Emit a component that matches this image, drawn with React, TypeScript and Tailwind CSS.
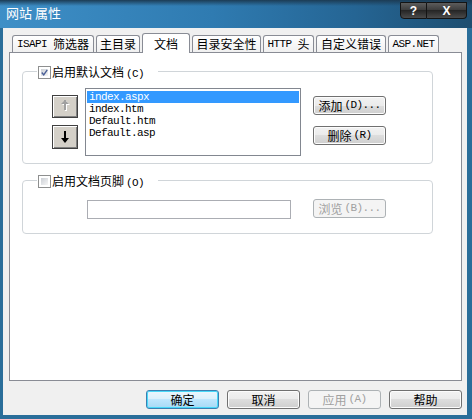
import React from "react";

const mono = "font-['Liberation_Mono','Noto_Sans_CJK_SC',monospace] text-[11px] tracking-[-0.6px]";

function Tab({ label, width, active }: { label: React.ReactNode; width: string; active?: boolean }) {
  if (active) {
    return (
      <div
        className={`${width} relative z-10 -mb-px h-[20px] flex items-center justify-center bg-white border border-b-0 border-[#898c95] rounded-t-[3px] text-[12px] text-black`}
      >
        {label}
      </div>
    );
  }
  return (
    <div
      className={`${width} h-[17px] flex items-center justify-center border border-b-0 border-[#898c95] rounded-t-[3px] bg-[linear-gradient(#ffffff,#f0f0f0)] text-[12px] text-black`}
    >
      {label}
    </div>
  );
}

function VButton({ children, disabled, focused }: { children: React.ReactNode; disabled?: boolean; focused?: boolean }) {
  if (disabled) {
    return (
      <div className="w-[73px] h-[19px] flex items-center justify-center rounded-[3px] border border-[#adb2b5] bg-[#f4f4f4] text-[12px] text-[#a0a0a0]">
        {children}
      </div>
    );
  }
  if (focused) {
    return (
      <div className="w-[73px] h-[19px] flex items-center justify-center rounded-[3px] border border-[#3c7fb1] bg-[linear-gradient(#eaf6fd_0%,#d9f0fc_50%,#bee6fd_50%,#a7d9f5_100%)] shadow-[inset_0_0_0_1px_#48d8f8] text-[12px] text-black">
        {children}
      </div>
    );
  }
  return (
    <div className="w-[73px] h-[19px] flex items-center justify-center rounded-[3px] border border-[#707070] bg-[linear-gradient(#f2f2f2_0%,#ebebeb_50%,#dddddd_50%,#cfcfcf_100%)] shadow-[inset_0_0_0_1px_#fcfcfc] text-[12px] text-black">
      {children}
    </div>
  );
}

function CheckBox({ checked }: { checked?: boolean }) {
  return (
    <div className="w-[13px] h-[13px] border border-[#8e8f8f] bg-white p-[2px]">
      <div className="w-full h-full bg-[linear-gradient(135deg,#cbcfd5,#f6f6f6)] flex items-center justify-center">
        {checked && (
          <svg width="9" height="9" viewBox="0 0 9 9">
            <path d="M1 4.5 L3.5 7.5 L8 1" fill="none" stroke="#4a5f97" strokeWidth="1.8" />
          </svg>
        )}
      </div>
    </div>
  );
}

function ArrowButton({ down }: { down?: boolean }) {
  return (
    <div
      className={`w-[26px] ${down ? "h-[24px]" : "h-[23px]"} border border-[#404040] bg-[#d4d0c8] shadow-[inset_1px_1px_0_#ffffff,inset_-1px_-1px_0_#808080] flex items-center justify-center`}
    >
      {down ? (
        <svg width="8" height="12" viewBox="0 0 8 12">
          <rect x="3" y="0" width="2" height="9" fill="#000" />
          <path d="M0 7 L8 7 L4 12 Z" fill="#000" />
        </svg>
      ) : (
        <svg width="9" height="13" viewBox="0 0 9 13">
          <rect x="4" y="1" width="2" height="10" fill="#ffffff" />
          <path d="M1 5 L9 5 L5 1 Z" fill="#ffffff" />
          <rect x="3" y="0" width="2" height="10" fill="#a0a0a0" />
          <path d="M0 4 L8 4 L4 0 Z" fill="#a0a0a0" />
        </svg>
      )}
    </div>
  );
}

export default function App() {
  return (
    <div className="w-[472px] h-[419px] flex flex-col font-['Noto_Sans_CJK_SC','Liberation_Sans',sans-serif] bg-[#1d4f73]">
      {/* Title bar */}
      <div className="relative h-[28px] shrink-0 bg-[linear-gradient(90deg,#3e8fc7_0%,#2f7bb1_45%,#256594_75%,#1e4e70_100%)]">
        <div className="absolute inset-x-0 top-0 h-[6px] bg-[linear-gradient(#1c3c55,transparent)]" />
        <span className="absolute left-[6px] top-[5px] text-[13px] leading-[16px] text-white">网站 属性</span>
        <div className="absolute right-[5px] top-[2px] flex">
          <div className="w-[27px] h-[17px] rounded-bl-[4px] border border-[#141414] bg-[linear-gradient(#5c5c5c,#3a3a3a_50%,#262626_50%,#4a4a4a)] flex items-center justify-center text-white text-[12px] font-bold font-['Liberation_Sans',sans-serif]">
            ?
          </div>
          <div className="w-[40px] h-[17px] rounded-br-[4px] border border-l-0 border-[#141414] bg-[linear-gradient(#5c5c5c,#3a3a3a_50%,#262626_50%,#4a4a4a)] flex items-center justify-center text-white text-[12px] font-bold font-['Liberation_Sans',sans-serif]">
            X
          </div>
        </div>
      </div>

      {/* Client area */}
      <div className="flex-1 flex flex-col bg-[#f0f0f0] border-l-[3px] border-r-[5px] border-b-[4px] border-[#2a6e9a] pl-[6px] pr-[5px]">
        {/* Tabs */}
        <div className="flex items-end gap-[2px] pl-[3px] mt-[5px] h-[19px]">
          <Tab width="w-[82px]" label={<><span className={mono}>ISAPI&nbsp;</span>筛选器</>} />
          <Tab width="w-[44px]" label="主目录" />
          <Tab width="w-[48px]" label="文档" active />
          <Tab width="w-[69px]" label="目录安全性" />
          <Tab width="w-[51px]" label={<><span className={mono}>HTTP&nbsp;</span>头</>} />
          <Tab width="w-[70px]" label="自定义错误" />
          <Tab width="w-[51px]" label={<span className={mono}>ASP.NET</span>} />
        </div>

        {/* Panel */}
        <div className="h-[329px] bg-white border border-[#898c95] pl-[12px] pt-[18px]">
          {/* Group 1 */}
          <div className="relative w-[411px] h-[93px] border border-[#d0d5d9] rounded-[4px] shadow-[inset_1px_1px_0_#ffffff]">
            <div className="absolute left-[14px] -top-[6px] flex items-center gap-[1px] bg-white pl-[1px] pr-[14px] h-[13px]">
              <CheckBox checked />
              <span className="text-[12px] leading-[13px] text-black">
                启用默认文档<span className={`${mono} ml-[2px]`}>(C)</span>
              </span>
            </div>
            <div className="flex pt-[16px] pl-[29px]">
              <div className="flex flex-col gap-[7px] mt-[7px]">
                <ArrowButton />
                <ArrowButton down />
              </div>
              <div className="ml-[7px] w-[216px] h-[68px] border border-[#828790] p-[1px] pt-[2px]">
                <div className={`${mono} leading-[12px] text-black`}>
                  <div className="h-[12px] bg-[#3399ff] text-white pl-[2px]">index.aspx</div>
                  <div className="h-[12px] pl-[2px]">index.htm</div>
                  <div className="h-[12px] pl-[2px]">Default.htm</div>
                  <div className="h-[12px] pl-[2px]">Default.asp</div>
                </div>
              </div>
              <div className="ml-[12px] mt-[8px] flex flex-col gap-[11px]">
                <VButton>
                  添加<span className={`${mono} ml-[2px]`}>(D)...</span>
                </VButton>
                <VButton>
                  删除<span className={`${mono} ml-[2px]`}>(R)</span>
                </VButton>
              </div>
            </div>
          </div>

          {/* Group 2 */}
          <div className="relative mt-[16px] w-[411px] h-[54px] border border-[#d0d5d9] rounded-[4px]">
            <div className="absolute left-[14px] -top-[6px] flex items-center gap-[1px] bg-white pl-[1px] pr-[14px] h-[13px]">
              <CheckBox />
              <span className="text-[12px] leading-[13px] text-black">
                启用文档页脚<span className={`${mono} ml-[2px]`}>(O)</span>
              </span>
            </div>
            <div className="flex items-start pt-[18px] pl-[64px]">
              <div className="mt-[1px] w-[204px] h-[19px] border border-[#abadb3] bg-white" />
              <div className="ml-[22px]">
                <VButton disabled>
                  浏览<span className={`${mono} ml-[2px]`}>(B)...</span>
                </VButton>
              </div>
            </div>
          </div>
        </div>

        {/* Dialog buttons */}
        <div className="flex justify-end gap-[8px] mt-[9px]">
          <VButton focused>确定</VButton>
          <VButton>取消</VButton>
          <VButton disabled>
            应用<span className={`${mono} ml-[2px]`}>(A)</span>
          </VButton>
          <VButton>帮助</VButton>
        </div>
      </div>
    </div>
  );
}
